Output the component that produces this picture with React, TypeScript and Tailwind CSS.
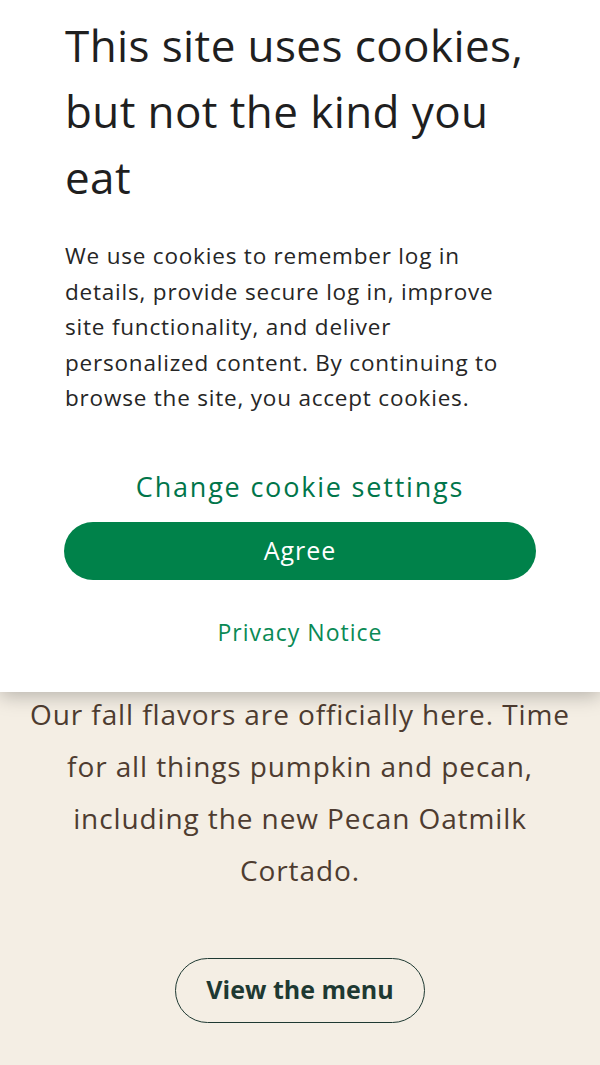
import React from "react";

const App = () => {
  return (
    <div className="min-h-[1065px] bg-[#f4eee4] font-['Open_Sans',sans-serif]">
      <section className="relative z-10 bg-white px-[65px] pt-[12px] pb-[44px] shadow-[0_4px_18px_rgba(0,0,0,0.25)]">
        <h1 className="text-[44px] leading-[66px] tracking-[0.4px] text-[#1f1f1f]">
          This site uses cookies,
          <br />
          but not the kind you
          <br />
          eat
        </h1>
        <p className="mt-[28px] text-[22.5px] leading-[35.5px] tracking-[0.8px] text-[#262626]">
          We use cookies to remember log in
          <br />
          details, provide secure log in, improve
          <br />
          site functionality, and deliver
          <br />
          personalized content. By continuing to
          <br />
          browse the site, you accept cookies.
        </p>
        <div className="mt-[53px] flex flex-col items-center">
          <button className="text-[27px] leading-[36px] tracking-[1.8px] text-[#00754a]">
            Change cookie settings
          </button>
          <button className="mt-[17px] h-[58px] w-[472px] rounded-full bg-[#00824a] text-[25px] font-medium leading-none tracking-[1px] text-white">
            Agree
          </button>
          <button className="mt-[36px] text-[23px] leading-[32px] tracking-[1px] text-[#0a8a55]">
            Privacy Notice
          </button>
        </div>
      </section>
      <section className="flex flex-col items-center pb-[40px]">
        <p className="-mt-[4px] text-center text-[28px] leading-[52px] tracking-[0.9px] text-[#4e3c30]">
          Our fall flavors are officially here. Time
          <br />
          for all things pumpkin and pecan,
          <br />
          including the new Pecan Oatmilk
          <br />
          Cortado.
        </p>
        <button className="mt-[62px] h-[65px] w-[250px] rounded-full border border-[#1e3932] text-[25px] font-bold tracking-[0px] text-[#1e3932]">
          View the menu
        </button>
      </section>
    </div>
  );
};

export default App;
